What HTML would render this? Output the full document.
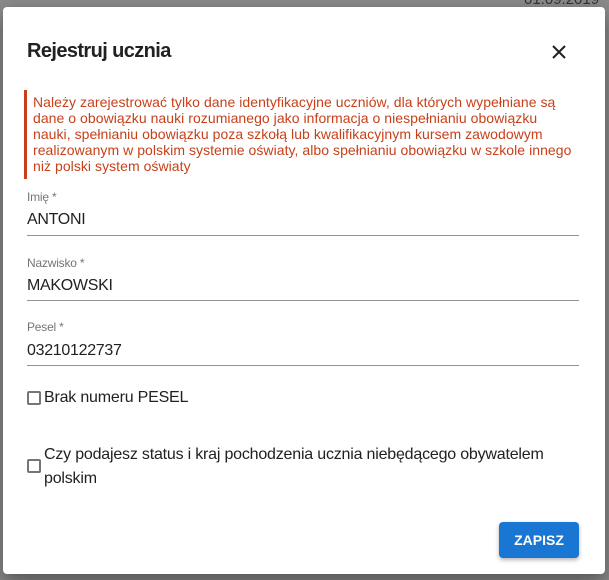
<!DOCTYPE html>
<html><head><meta charset="utf-8"><style>
*{margin:0;padding:0;box-sizing:border-box}
body{width:609px;height:580px;background:#8a8a8a;position:relative;overflow:hidden;font-family:"Liberation Sans",sans-serif}
.bgtxt{position:absolute;left:524px;top:-9px;color:#333;font-size:15px}
.dlg{position:absolute;left:3px;top:7px;width:602px;height:567px;background:#fff;border-radius:4px;box-shadow:0 8px 20px rgba(0,0,0,.4)}
.a{position:absolute;white-space:nowrap}
.t{left:24px;top:33px;font-size:20px;font-weight:bold;color:#212121;letter-spacing:-0.6px}
.warn{left:21px;top:83px;height:89px;border-left:3px solid #c8401a;padding:4px 0 0 6px;color:#c8401a;font-size:14px;line-height:16px;letter-spacing:0.05px}
.lbl{font-size:12px;color:#757575;left:24px;letter-spacing:-0.2px}
.val{font-size:16px;color:#212121;left:24px;letter-spacing:-0.3px}
.ln{position:absolute;left:24px;width:552px;height:1px;background:#949494}
.cb{position:absolute;left:24px;width:14px;height:14px;border:2px solid #757575;border-radius:2px}
.ct{font-size:16px;color:#212121;left:48px;letter-spacing:-0.2px;line-height:24px}
.btn{position:absolute;left:496px;top:515px;width:80px;height:36px;background:#1976d2;border-radius:4px;color:#fff;font-weight:bold;font-size:14px;text-align:center;line-height:36px;box-shadow:0 2px 4px rgba(0,0,0,.3)}
</style></head><body>
<div class="bgtxt">01.09.2019</div>
<div class="dlg">
<div class="a t">Rejestruj ucznia</div>
<svg class="a" style="left:548px;top:37px" width="16" height="16" viewBox="0 0 16 16"><path d="M2 2L14 14M14 2L2 14" stroke="#212121" stroke-width="2"/></svg>
<div class="a warn">Należy zarejestrować tylko dane identyfikacyjne uczniów, dla których wypełniane są<br>dane o obowiązku nauki rozumianego jako informacja o niespełnianiu obowiązku<br>nauki, spełnianiu obowiązku poza szkołą lub kwalifikacyjnym kursem zawodowym<br>realizowanym w polskim systemie oświaty, albo spełnianiu obowiązku w szkole innego<br>niż polski system oświaty</div>
<div class="a lbl" style="top:183px">Imię *</div>
<div class="a val" style="top:204px">ANTONI</div>
<div class="ln" style="top:228px"></div>
<div class="a lbl" style="top:249px">Nazwisko *</div>
<div class="a val" style="top:270px">MAKOWSKI</div>
<div class="ln" style="top:293px"></div>
<div class="a lbl" style="top:313px">Pesel *</div>
<div class="a val" style="top:335px">03210122737</div>
<div class="ln" style="top:358px"></div>
<div class="cb" style="top:384px"></div>
<div class="a ct" style="top:379px;left:41px">Brak numeru PESEL</div>
<div class="cb" style="top:452px"></div>
<div class="a ct" style="top:436px;left:41px">Czy podajesz status i kraj pochodzenia ucznia niebędącego obywatelem<br>polskim</div>
<div class="btn">ZAPISZ</div>
</div>
</body></html>
